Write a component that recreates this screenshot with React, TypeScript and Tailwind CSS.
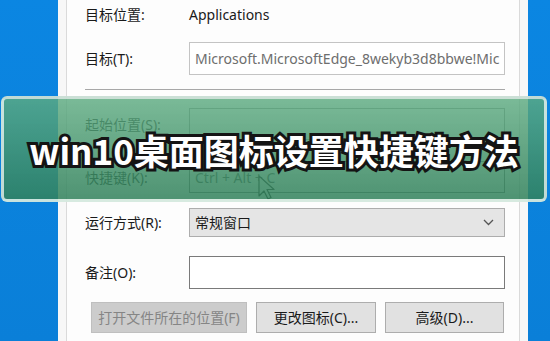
import type { ReactNode } from 'react'

function Row({
  label,
  className = '',
  children,
}: {
  label: string
  className?: string
  children: ReactNode
}) {
  return (
    <div className={`flex items-center ${className}`}>
      <span className="w-[104px] shrink-0 text-[14px] text-[#1a1a1a]">{label}</span>
      {children}
    </div>
  )
}

export default function App() {
  return (
    <div className="relative flex h-[341px] w-[550px] overflow-hidden bg-[#0d83dc] font-['Noto_Sans','Noto_Sans_CJK_SC',sans-serif]">
      {/* desktop on the left */}
      <div className="w-[58px] shrink-0 bg-gradient-to-b from-[#0b86e2] to-[#0a7fd8]" />

      {/* properties window */}
      <div className="flex w-[470px] shrink-0 bg-[#f7f7f7] px-[8px]">
        <div className="min-w-0 flex-1 border-x border-[#dadada] bg-[#fdfdfd] pl-[18px] pr-[14px]">
          <Row label="目标位置:" className="h-[28px]">
            <span className="text-[14px] text-[#1a1a1a]">Applications</span>
          </Row>

          <Row label="目标(T):" className="mt-[14px] h-[33px]">
            <div className="flex h-full min-w-0 flex-1 items-center overflow-hidden whitespace-nowrap border border-[#c4c4c4] bg-white pl-[5px] text-[14px] text-[#6e6e6e]">
              Microsoft.MicrosoftEdge_8wekyb3d8bbwe!Mic
            </div>
          </Row>

          <div className="mt-[14px] h-px bg-[#a8a8a8]" />

          <Row label="起始位置(S):" className="mt-[18px] h-[32px]">
            <div className="h-full min-w-0 flex-1 border border-[#9a9a9a] bg-white" />
          </Row>

          <Row label="快捷键(K):" className="mt-[21px] h-[32px]">
            <div className="flex h-full min-w-0 flex-1 items-center border border-[#7a7a7a] bg-white pl-[5px] text-[14px] text-[#555]">
              Ctrl + Alt + C
            </div>
          </Row>

          <Row label="运行方式(R):" className="mt-[15px] h-[29px]">
            <div className="flex h-full min-w-0 flex-1 items-center justify-between border border-[#adadad] bg-[#e5e5e5] pl-[5px] pr-[10px] text-[14px] text-[#1a1a1a]">
              <span>常规窗口</span>
              <svg width="11" height="7" viewBox="0 0 11 7" fill="none">
                <path d="M1 1l4.5 4.5L10 1" stroke="#555" strokeWidth="1.3" />
              </svg>
            </div>
          </Row>

          <Row label="备注(O):" className="mt-[19px] h-[33px]">
            <div className="h-full min-w-0 flex-1 border border-[#7a7a7a] bg-white" />
          </Row>

          <div className="mt-[13px] flex h-[31px] gap-[9px] pl-[6px] text-[14px]">
            <div className="flex w-[156px] items-center justify-center border border-[#bfbfbf] bg-[#cccccc] text-[#858585]">
              打开文件所在的位置(F)
            </div>
            <div className="flex w-[120px] items-center justify-center border border-[#adadad] bg-[#e1e1e1] text-[#1a1a1a]">
              更改图标(C)...
            </div>
            <div className="flex w-[119px] items-center justify-center border border-[#adadad] bg-[#e1e1e1] text-[#1a1a1a]">
              高级(D)...
            </div>
          </div>
        </div>
      </div>

      {/* desktop on the right */}
      <div className="flex-1 bg-gradient-to-b from-[#0b86e2] to-[#0a7fd8]" />

      {/* mouse pointer */}
      <svg className="absolute left-[258px] top-[175px]" width="17" height="25" viewBox="0 0 17 25">
        <path d="M1 1v20l5-5 4 8 3-1.5-4-8h7z" fill="#fff" stroke="#222" strokeWidth="1.2" strokeLinejoin="round" />
      </svg>

      {/* title banner */}
      <div className="absolute left-[1px] top-[96px] flex h-[106px] w-[546px] items-center justify-center rounded-[6px] border-[3px] border-white/70 bg-gradient-to-b from-[rgba(92,170,128,0.82)] to-[rgba(50,130,92,0.86)]">
        <span className="font-['Noto_Sans_CJK_SC',sans-serif] text-[35px] font-bold leading-none tracking-[0px] text-white [-webkit-text-stroke:6px_#141414] [paint-order:stroke_fill]">
          win10桌面图标设置快捷键方法
        </span>
      </div>
    </div>
  )
}
